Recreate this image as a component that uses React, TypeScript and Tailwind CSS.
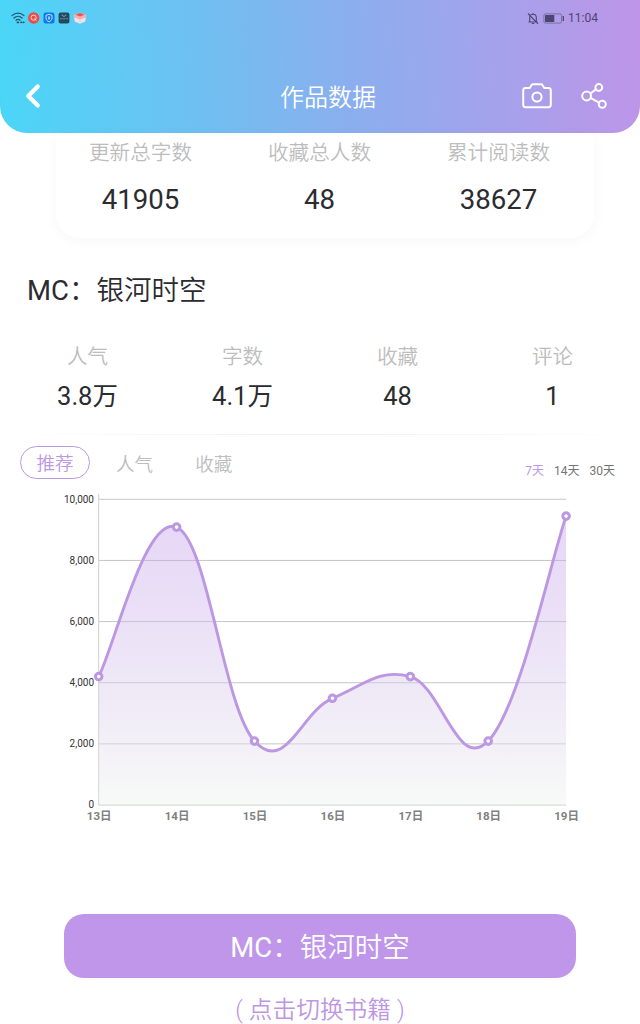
import { ChevronLeft } from 'lucide-react';

const totals = [
  { label: '更新总字数', value: '41905' },
  { label: '收藏总人数', value: '48' },
  { label: '累计阅读数', value: '38627' },
];

const bookStats = [
  { label: '人气', value: '3.8万' },
  { label: '字数', value: '4.1万' },
  { label: '收藏', value: '48' },
  { label: '评论', value: '1' },
];

const data = [
  { day: '13日', value: 4200 },
  { day: '14日', value: 9090 },
  { day: '15日', value: 2090 },
  { day: '16日', value: 3490 },
  { day: '17日', value: 4200 },
  { day: '18日', value: 2090 },
  { day: '19日', value: 9450 },
];

const LEFT = 98.7;
const STEP = 77.9;
const TOP = 14.3;
const BOTTOM = 320;

const toY = (v: number) => BOTTOM - (v / 10000) * (BOTTOM - TOP);

const points = data.map((d, i) => ({ x: LEFT + STEP * i, y: toY(d.value) }));

// smooth line: handles are (next - prev) / 5, end points use themselves as the missing neighbour
function buildLine() {
  const handle = (i: number) => {
    const prev = points[Math.max(i - 1, 0)];
    const next = points[Math.min(i + 1, points.length - 1)];
    return { x: (next.x - prev.x) / 5, y: (next.y - prev.y) / 5 };
  };
  let d = `M${points[0].x},${points[0].y}`;
  for (let i = 1; i < points.length; i++) {
    const a = points[i - 1];
    const b = points[i];
    const ha = handle(i - 1);
    const hb = handle(i);
    d += ` C${a.x + ha.x},${a.y + ha.y} ${b.x - hb.x},${b.y - hb.y} ${b.x},${b.y}`;
  }
  return d;
}

function Chart() {
  const line = buildLine();
  const right = points[points.length - 1].x;
  return (
    <svg width="640" height="345" viewBox="0 0 640 345" className="block">
      <defs>
        <linearGradient id="area" x1="0" y1="0" x2="0" y2="1">
          <stop offset="0" stopColor="#be96e8" stopOpacity="0.38" />
          <stop offset="1" stopColor="#f0f4f0" stopOpacity="0.5" />
        </linearGradient>
      </defs>
      {[0, 2000, 4000, 6000, 8000, 10000].map((v) => (
        <g key={v}>
          <line x1={LEFT} x2={right} y1={toY(v)} y2={toY(v)} stroke="#c6c6c6" />
          <text x="94" y={toY(v) + 3.3} textAnchor="end" fontSize="10" fill="#333">
            {v.toLocaleString('en-US')}
          </text>
        </g>
      ))}
      <line x1={LEFT} x2={LEFT} y1="9" y2={BOTTOM} stroke="#cfcfcf" />
      <path d={`${line} L${right},${BOTTOM} L${LEFT},${BOTTOM} Z`} fill="url(#area)" />
      <path d={line} fill="none" stroke="#bc97e2" strokeWidth="2.9" />
      {points.map((p, i) => (
        <g key={data[i].day}>
          <circle cx={p.x} cy={p.y} r="3.3" fill="#fff" stroke="#bc97e2" strokeWidth="3" />
          <text x={p.x + 0.5} y="335" textAnchor="middle" fontSize="11.5" fontWeight="700" fill="#808080">
            {data[i].day}
          </text>
        </g>
      ))}
    </svg>
  );
}

function StatusBar() {
  return (
    <div className="flex h-9 items-center justify-between pr-[42px] pl-[11px]">
      <div className="flex items-center gap-[3px]">
        <svg width="14" height="12" viewBox="0 0 14 12" fill="none" stroke="#245672" strokeWidth="1.3" strokeLinecap="round">
          <path d="M1 3.6C4.5.3 9.5.3 13 3.6M3 6c2.3-2.1 5.7-2.1 8 0M5 8.2c1.2-1 2.8-1 4 0" />
          <path d="M6.5 10.4h.8M10 10.3h.4M12.4 10.3h.3" strokeWidth="1.8" />
        </svg>
        <svg width="12" height="12" viewBox="0 0 12 12" fill="none">
          <circle cx="5.7" cy="6" r="5.7" fill="#ed4b45" />
          <circle cx="5.6" cy="5.7" r="2.6" stroke="#ffd9d6" />
          <path d="M6.3 6.5l2 2.2" stroke="#ffd9d6" />
        </svg>
        <svg width="12" height="12" viewBox="0 0 12 12" fill="none">
          <rect x=".5" y=".5" width="11" height="11" rx="2.2" fill="#0b79e8" />
          <path d="M6 2.3l3 1v2.6c0 2-1.2 3.1-3 4-1.8-.9-3-2-3-4V3.3z" stroke="#d5ecff" strokeWidth=".9" />
          <path d="M6 4.6v2.8" stroke="#fff" strokeWidth="1.2" />
        </svg>
        <svg width="12" height="12" viewBox="0 0 12 12" fill="none">
          <rect x=".6" y=".5" width="10.8" height="11" rx="2" fill="#23495c" />
          <path d="M3.9 2.6c.5 2.2 3.7 2.2 4.2 0" stroke="#a9cbd9" strokeWidth=".8" />
          <path d="M2 6.7h8" stroke="#7898a8" strokeWidth="1.1" strokeDasharray="1 .4" />
        </svg>
        <svg width="14" height="12" viewBox="0 0 14 12" fill="none">
          <path d="M1 4.8l6 2 6-2-.7 4.6L7 11.7 1.7 9.4z" fill="#eee3ea" />
          <path d="M.6 3L7 .5 13.4 3 13 5.4 7 7.4 1 5.4z" fill="#f4b1ae" />
          <path d="M2.5 2.8L7 1.1l4.5 1.7L7 4.4z" fill="#df5656" />
          <path d="M7 7v4.4" stroke="#d5c7d5" strokeWidth=".7" />
        </svg>
      </div>
      <div className="flex items-center text-[#4d4572]">
        <svg width="12" height="13" viewBox="0 0 12 13" fill="none" stroke="currentColor" strokeWidth="1.1">
          <path d="M1.5 10h9M2.7 10V5.7c0-2 1.4-3.4 3.3-3.4s3.3 1.4 3.3 3.4V10M6 1v1.3M4.8 11.5h2.4M1 1.5l10 10.3" />
        </svg>
        <svg width="22" height="11" viewBox="0 0 22 11" className="ml-1" fill="none">
          <rect x=".9" y=".9" width="17.6" height="9.2" rx="1.5" stroke="#776a9d" strokeWidth=".9" />
          <rect x="2" y="2" width="9.3" height="7" rx=".5" fill="currentColor" />
          <path d="M20.3 3v5" stroke="currentColor" strokeWidth="1.3" />
        </svg>
        <span className="ml-[3px] text-[12px] leading-none">11:04</span>
      </div>
    </div>
  );
}

function Header() {
  return (
    <header className="h-[133px] shrink-0 rounded-b-[27px] bg-[linear-gradient(88deg,#4ad6f7_0%,#68c4f3_25%,#8aafee_54%,#be95e8_100%)]">
      <StatusBar />
      <div className="mt-[34px] grid h-[51px] grid-cols-[1fr_auto_1fr] items-center pl-4 text-white">
        <ChevronLeft className="-ml-[2px] size-[38px]" strokeWidth={2.7} />
        <h1 className="pt-1 text-[24px] leading-none font-[350]">作品数据</h1>
        <div className="flex items-center justify-end gap-[29px] pr-[34px]">
          <svg width="30" height="26" viewBox="0 0 30 26" fill="none" stroke="currentColor" strokeWidth="2">
            <path
              d="M3.6 5h4.2l1.8-3Q10 1.2 11 1.2h8q1 0 1.4.8l1.8 3h4.2q2.400 0 2.400 2.400v14.4q0 2.400-2.400 2.400H3.6q-2.400 0-2.400-2.400V7.4q0-2.400 2.400-2.400z"
              strokeLinejoin="round"
            />
            <circle cx="15" cy="14" r="4.6" />
          </svg>
          <svg width="26" height="26" viewBox="0 0 26 26" fill="none" stroke="currentColor" strokeWidth="2" className="-mr-px">
            <circle cx="5.6" cy="13" r="4.4" />
            <circle cx="17.8" cy="4.5" r="3.4" />
            <circle cx="21.3" cy="21.2" r="3.5" />
            <path d="M9.3 10.5l5.7-4.1M9.5 14.9l8.5 4.7" />
          </svg>
        </div>
      </div>
    </header>
  );
}

export default function App() {
  return (
    <div className="flex h-[1024px] w-[640px] flex-col overflow-hidden bg-white font-['Roboto','Noto_Sans_CJK_SC',sans-serif] text-[#2b2b30]">
      <Header />

      <div className="ml-14 h-[105px] w-[538px] shrink-0 rounded-b-[24px] shadow-[0_3px_14px_rgba(0,0,0,0.035)]">
        <div className="-ml-[5px] grid w-[537px] grid-cols-3">
          {totals.map((t) => (
            <div key={t.label} className="flex flex-col items-center">
              <span className="mt-[5px] text-[20.6px] leading-[30px] font-[350] text-[#bdbdbd]">{t.label}</span>
              <span className="mt-[16px] text-[27.6px] leading-[32px]">{t.value}</span>
            </div>
          ))}
        </div>
      </div>

      <h2 className="mt-[33px] ml-[27px] text-[27.5px] leading-[40px]">
        MC<span className="font-[350]">：银河时空</span>
      </h2>

      <div className="mt-[31px] ml-[10px] grid w-[620px] grid-cols-4">
        {bookStats.map((s) => (
          <div key={s.label} className="flex flex-col items-center">
            <span className="text-[20.6px] leading-[30px] font-[350] text-[#bdbdbd]">{s.label}</span>
            <span className="mt-[7px] text-[25.5px] leading-[34px]">{s.value}</span>
          </div>
        ))}
      </div>

      <div className="mt-[21px] h-px shrink-0 bg-linear-to-r from-white via-[#efefef] to-white" />

      <div className="mt-[10px] flex h-[34px] shrink-0 items-center text-[18.6px] font-[350]">
        <button className="ml-5 h-[33px] w-[70px] rounded-full border border-[#bd98e4] pt-[5px] leading-none text-[#bd96e4]">推荐</button>
        <button className="mt-[7px] ml-[26px] text-[#bdbdbd]">人气</button>
        <button className="mt-[7px] ml-[42px] text-[#bdbdbd]">收藏</button>
        <div className="mt-[18px] mr-[25px] ml-auto flex gap-[10px] text-[12px] font-normal text-[#757575]">
          <span className="text-[#bd96e4]">7天</span>
          <span>14天</span>
          <span>30天</span>
        </div>
      </div>

      <div className="mt-[6px] shrink-0">
        <Chart />
      </div>

      <button className="mx-16 mt-[84px] h-16 shrink-0 rounded-[20px] bg-[#bf96e9] pt-1 text-[27.5px] text-white">
        MC<span className="font-[350]">：银河时空</span>
      </button>
      <p className="mt-[15px] flex shrink-0 justify-center gap-[6px] text-[23.7px] leading-[34px] font-[350] text-[#bd96e4]">
        <span>(</span>
        <span>点击切换书籍</span>
        <span>)</span>
      </p>
    </div>
  );
}
